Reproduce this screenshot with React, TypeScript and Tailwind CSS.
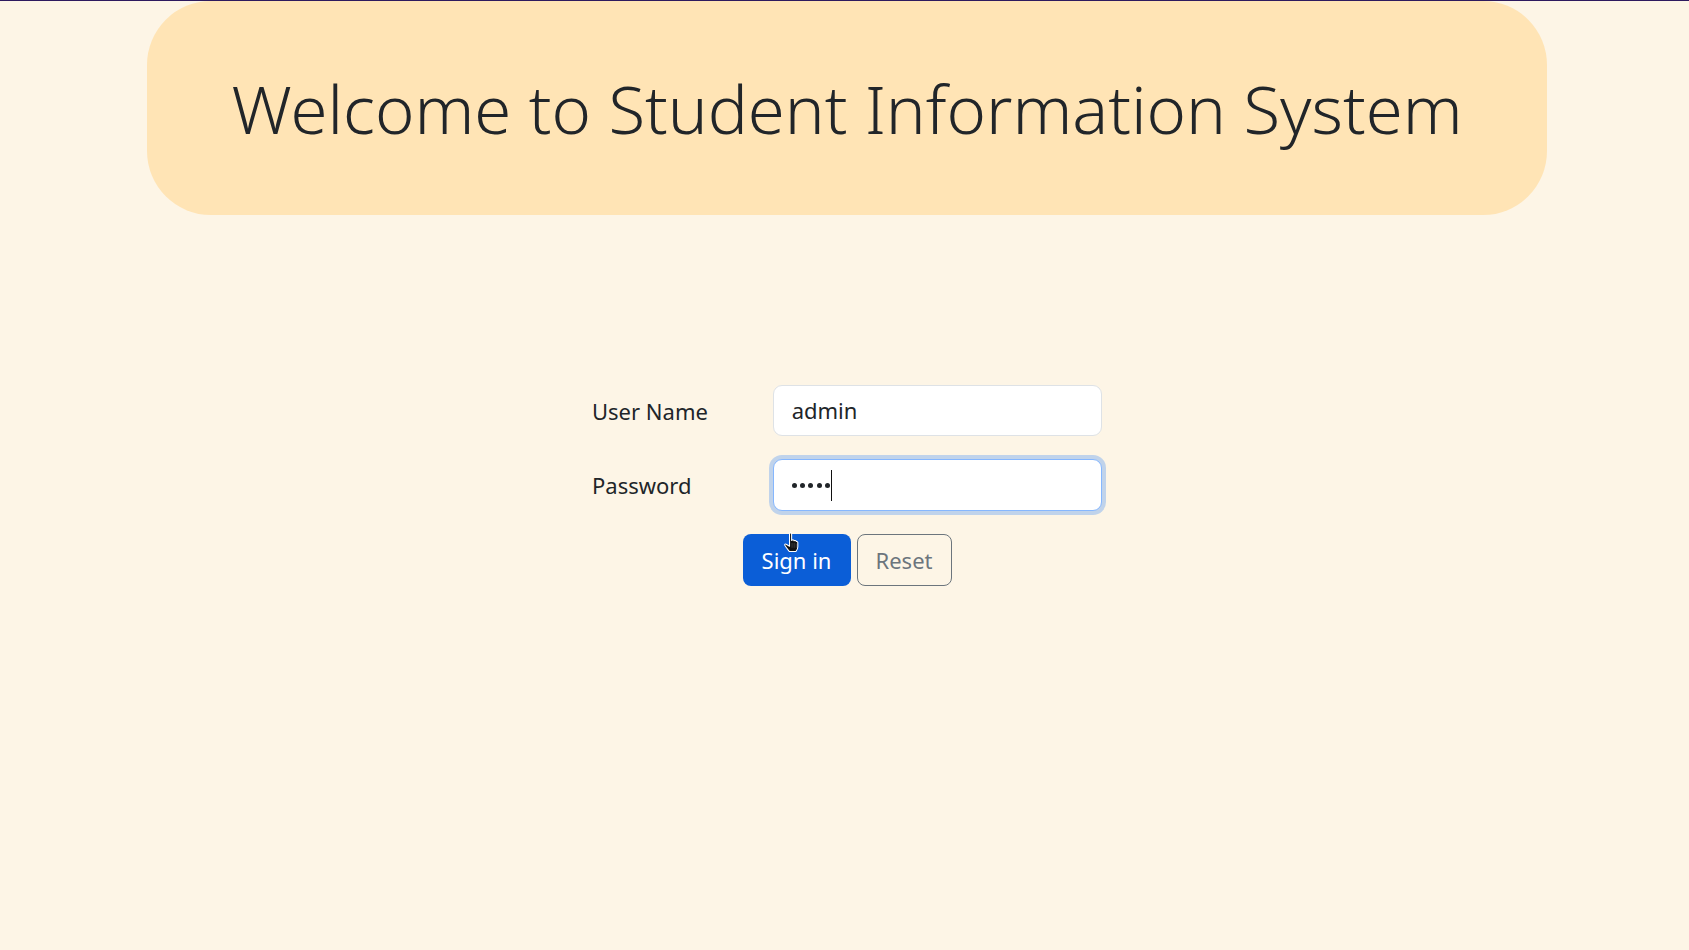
import React from "react";

function HandCursor() {
  return (
    <svg
      className="absolute left-[40px] top-[-2px] pointer-events-none"
      width="16"
      height="21"
      viewBox="0 0 14 20"
    >
      <path
        d="M5.6 1.6 C5.6 0.6 7.6 0.6 7.6 1.6 L7.6 8 L8.3 7.6 C8.9 7.3 9.9 7.5 9.9 8.3 L10.6 8.1 C11.3 7.9 12 8.4 12 9 L12.6 9 C13.2 9 13.5 9.5 13.5 10.1 L13.5 14 C13.5 16 12.6 17.5 11.6 18.6 L5.4 18.6 C4.4 17.2 2 14.2 1.1 12.6 C0.7 11.8 1.6 11 2.4 11.6 L5.6 13.6 Z"
        fill="#111"
        stroke="#fff"
        strokeWidth="1"
        strokeLinejoin="round"
      />
      <path d="M8 10.5 L8 15 M10 10.5 L10 15 M12 11 L12 15" stroke="#555" strokeWidth="0.6" />
    </svg>
  );
}

export default function App() {
  return (
    <div className="min-h-[950px] bg-[#fdf5e6] border-t border-[#2e1a5e] font-['Noto_Sans',_'Open_Sans',_sans-serif] text-[#212529] pl-[5px]">
      <div className="flex justify-center">
        <div className="w-[1400px] h-[214px] rounded-[64px] bg-[#ffe4b5] flex items-center justify-center">
          <h1 className="text-[67px] font-light leading-none tracking-normal">
            Welcome to Student Information System
          </h1>
        </div>
      </div>

      <div className="mt-[170px] flex justify-center">
        <div className="w-[510px] flex flex-col">
          <div className="flex items-center">
            <label className="w-[181px] text-[22px] leading-none">User Name</label>
            <div className="w-[330px] h-[51px] border border-[#dee2e6] rounded-[9px] bg-white px-[18px] flex items-center text-[22px]">
              admin
            </div>
          </div>
          <div className="flex items-center mt-[23px]">
            <label className="w-[181px] text-[22px] leading-none">Password</label>
            <div className="w-[330px] h-[52px] border border-[#86b7fe] rounded-[9px] bg-white px-[18px] flex items-center shadow-[0_0_0_4px_rgba(13,110,253,0.25)]">
              <span className="flex items-center gap-[3.3px]">
                <span className="w-[5px] h-[5px] rounded-full bg-[#212529]" />
                <span className="w-[5px] h-[5px] rounded-full bg-[#212529]" />
                <span className="w-[5px] h-[5px] rounded-full bg-[#212529]" />
                <span className="w-[5px] h-[5px] rounded-full bg-[#212529]" />
                <span className="w-[5px] h-[5px] rounded-full bg-[#212529]" />
              </span>
              <span className="ml-[1px] w-[1px] h-[31px] bg-[#111]" />
            </div>
          </div>
        </div>
      </div>

      <div className="mt-[23px] flex justify-center gap-[6px]">
        <button className="relative w-[108px] h-[52px] rounded-[8px] bg-[#0b5ed7] text-white text-[22px] flex items-center justify-center">
          Sign in
          <HandCursor />
        </button>
        <button className="w-[95px] h-[52px] rounded-[8px] border border-[#6c757d] text-[#6c757d] text-[22px] flex items-center justify-center">
          Reset
        </button>
      </div>
    </div>
  );
}
